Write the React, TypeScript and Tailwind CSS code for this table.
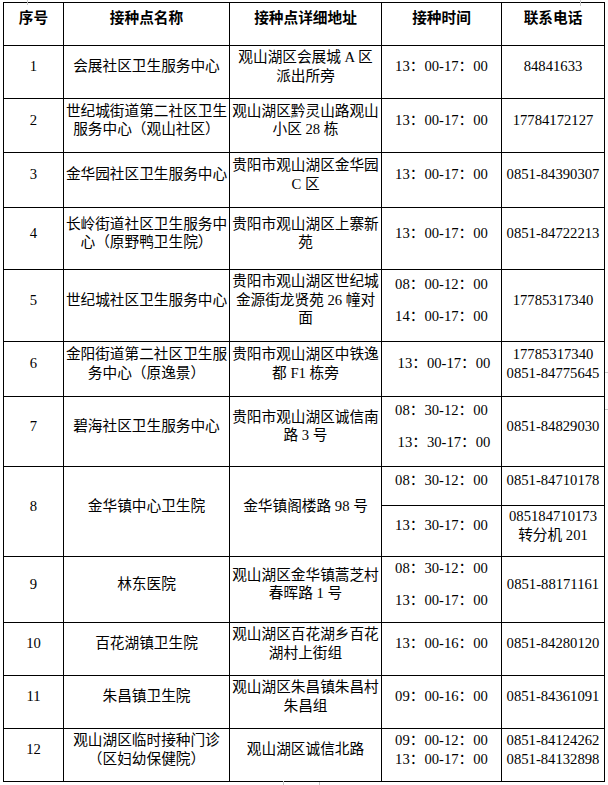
import React from "react";

type Row = {
  n: string;
  name: string[];
  addr: string[];
  time: string[];
  timeGap?: boolean;
  timeShift?: number[];
  phone: string[];
};

const rows: Row[] = [
  { n: "1", name: ["会展社区卫生服务中心"], addr: ["观山湖区会展城 A 区", "派出所旁"], time: ["13：00-17：00"], phone: ["84841633"] },
  { n: "2", name: ["世纪城街道第二社区卫生", "服务中心（观山社区）"], addr: ["观山湖区黔灵山路观山", "小区 28 栋"], time: ["13：00-17：00"], phone: ["17784172127"] },
  { n: "3", name: ["金华园社区卫生服务中心"], addr: ["贵阳市观山湖区金华园", "C 区"], time: ["13：00-17：00"], phone: ["0851-84390307"] },
  { n: "4", name: ["长岭街道社区卫生服务中", "心（原野鸭卫生院）"], addr: ["贵阳市观山湖区上寨新", "苑"], time: ["13：00-17：00"], phone: ["0851-84722213"] },
  { n: "5", name: ["世纪城社区卫生服务中心"], addr: ["贵阳市观山湖区世纪城", "金源街龙贤苑 26 幢对", "面"], time: ["08：00-12：00", "14：00-17：00"], timeGap: true, phone: ["17785317340"] },
  { n: "6", name: ["金阳街道第二社区卫生服", "务中心（原逸景）"], addr: ["贵阳市观山湖区中铁逸", "都 F1 栋旁"], time: ["13：00-17：00"], timeShift: [0], phone: ["17785317340", "0851-84775645"] },
  { n: "7", name: ["碧海社区卫生服务中心"], addr: ["贵阳市观山湖区诚信南", "路 3 号"], time: ["08：30-12：00", "13：30-17：00"], timeGap: true, timeShift: [1], phone: ["0851-84829030"] },
];

const rowsAfter: Row[] = [
  { n: "9", name: ["林东医院"], addr: ["观山湖区金华镇蒿芝村", "春晖路 1 号"], time: ["08：30-12：00", "13：00-17：00"], timeGap: true, phone: ["0851-88171161"] },
  { n: "10", name: ["百花湖镇卫生院"], addr: ["观山湖区百花湖乡百花", "湖村上街组"], time: ["13：00-16：00"], phone: ["0851-84280120"] },
  { n: "11", name: ["朱昌镇卫生院"], addr: ["观山湖区朱昌镇朱昌村", "朱昌组"], time: ["09：00-16：00"], phone: ["0851-84361091"] },
  { n: "12", name: ["观山湖区临时接种门诊", "（区妇幼保健院）"], addr: ["观山湖区诚信北路"], time: ["09：00-12：00", "13：00-17：00"], phone: ["0851-84124262", "0851-84132898"] },
];

function Cell({
  lines,
  gap,
  shift,
  span,
  bold,
}: {
  lines: string[];
  gap?: boolean;
  shift?: number[];
  span?: boolean;
  bold?: boolean;
}) {
  return (
    <div
      className={
        "bg-white flex flex-col items-center justify-center pb-[11px] text-center whitespace-nowrap " +
        (gap ? "leading-[32px] " : "leading-[18.5px] ") +
        (span ? "row-span-2 " : "") +
        (bold ? "font-bold " : "")
      }
    >
      {lines.map((l, i) => (
        <div key={i} className={shift && shift.includes(i) ? "pl-[5px]" : ""}>
          {l}
        </div>
      ))}
    </div>
  );
}

function DataRow({ r }: { r: Row }) {
  return (
    <>
      <Cell lines={[r.n]} />
      <Cell lines={r.name} />
      <Cell lines={r.addr} />
      <Cell lines={r.time} gap={r.timeGap} shift={r.timeShift} />
      <Cell lines={r.phone} />
    </>
  );
}

export default function App() {
  return (
    <div className="relative bg-white w-[608px] min-h-[785px] pt-[2px] pl-[3px] text-black font-['Liberation_Serif','Noto_Sans_CJK_SC',serif] text-[14.67px]">
      <div className="grid w-fit bg-black p-px gap-px grid-cols-[59px_165px_151px_119px_102px] grid-rows-[42px_52px_53px_54px_61px_71px_54px_69px_38px_50px_65px_52px_52px_52px]">
        <Cell lines={["序号"]} bold />
        <Cell lines={["接种点名称"]} bold />
        <Cell lines={["接种点详细地址"]} bold />
        <Cell lines={["接种时间"]} bold />
        <Cell lines={["联系电话"]} bold />
        {rows.map((r) => (
          <DataRow key={r.n} r={r} />
        ))}
        <Cell lines={["8"]} span />
        <Cell lines={["金华镇中心卫生院"]} span />
        <Cell lines={["金华镇阁楼路 98 号"]} span />
        <Cell lines={["08：30-12：00"]} />
        <Cell lines={["0851-84710178"]} />
        <Cell lines={["13：30-17：00"]} />
        <Cell lines={["085184710173", "转分机 201"]} />
        {rowsAfter.map((r) => (
          <DataRow key={r.n} r={r} />
        ))}
      </div>
      <div className="absolute left-[27px] top-0 w-px h-[5px] bg-[#c8c8c8]" />
      <div className="absolute left-[580px] top-0 w-px h-[6px] bg-[#c8c8c8]" />
      <div className="absolute left-[605px] top-[372px] w-[3px] h-px bg-[#c8c8c8]" />
      <div className="absolute left-[605px] top-[409px] w-[3px] h-px bg-[#c8c8c8]" />
      <div className="absolute left-[283px] top-[781px] w-px h-[4px] bg-[#c8c8c8]" />
      <div className="absolute left-[319px] top-[782px] w-px h-[3px] bg-[#c8c8c8]" />
    </div>
  );
}
